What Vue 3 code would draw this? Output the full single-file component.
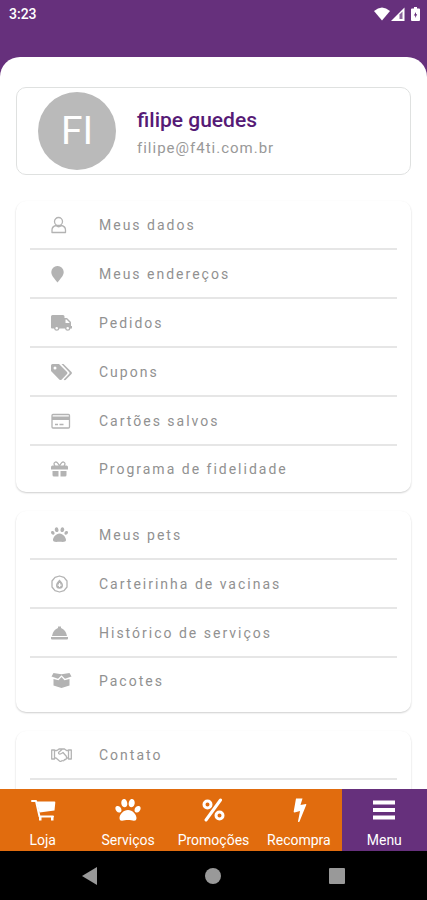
<template>
  <div class="app">
    <!-- barra de status -->
    <header class="status-bar">
      <span class="clock">3:23</span>
      <div class="status-icons">
        <svg width="16" height="14" viewBox="0 0 16 14"><path d="M0 4Q8-3 16 4L8 13.500Z" fill="#fff" /></svg>
        <svg width="14" height="14" viewBox="0 0 14 14">
          <path d="M0 14L13.500 .5V14Z" fill="#fff" />
          <path d="M8.500 7.500L11.500 4.500V12H8.500Z" fill="#66307c" opacity=".75" />
        </svg>
        <svg class="battery" width="9" height="14" viewBox="0 0 9 14">
          <path d="M3 0H6V1.500H8Q9 1.500 9 2.500V13Q9 14 8 14H1Q0 14 0 13V2.500Q0 1.500 1 1.500H3Z" fill="#fff" />
          <path d="M5 5L2.800 8.500H4.200V11L6.200 7.300H5Z" fill="#66307c" />
        </svg>
      </div>
    </header>

    <main class="sheet">
      <!-- perfil -->
      <section class="profile">
        <div class="avatar">FI</div>
        <div class="profile-info">
          <h1>filipe guedes</h1>
          <p>filipe@f4ti.com.br</p>
        </div>
      </section>

      <!-- grupos do menu -->
      <nav
        v-for="(group, index) in groups"
        :key="index"
        :class="['card', group.size]"
      >
        <a v-for="item in group.items" :key="item.label" href="#" class="row">
          <span class="row-icon">
            <svg :width="item.w" height="18" :viewBox="`0 0 ${item.w} 18`">
              <path v-if="item.fill" :d="item.fill" fill="currentColor" fill-rule="evenodd" />
              <path v-if="item.line" :d="item.line" fill="none" stroke="currentColor" stroke-width="1.300" stroke-linejoin="round" />
            </svg>
          </span>
          <span>{{ item.label }}</span>
        </a>
      </nav>
    </main>

    <!-- abas -->
    <nav class="tabs">
      <button
        v-for="tab in tabs"
        :key="tab.label"
        type="button"
        :class="['tab', { active: tab.label === current }]"
        @click="current = tab.label"
      >
        <svg width="26" height="24" viewBox="0 0 26 24">
          <path v-if="tab.fill" :d="tab.fill" fill="currentColor" />
          <path v-if="tab.line" :d="tab.line" fill="none" stroke="currentColor" :stroke-width="tab.stroke" stroke-linecap="round" stroke-linejoin="round" />
        </svg>
        <span>{{ tab.label }}</span>
      </button>
    </nav>

    <!-- navegação do sistema -->
    <footer class="system-nav">
      <button type="button" aria-label="Voltar">
        <svg width="18" height="18" viewBox="0 0 18 18"><path d="M16 0V18L1 9Z" fill="#999" /></svg>
      </button>
      <button type="button" aria-label="Início">
        <svg width="18" height="18" viewBox="0 0 18 18"><circle cx="9" cy="9" r="8" fill="#999" /></svg>
      </button>
      <button type="button" aria-label="Recentes">
        <svg width="18" height="18" viewBox="0 0 18 18"><rect x="1" y="1" width="16" height="16" rx="1" fill="#999" /></svg>
      </button>
    </footer>
  </div>
</template>

<script setup>
import { ref } from 'vue'

const current = ref('Menu')

const groups = [
  {
    items: [
      {
        label: 'Meus dados',
        w: 16,
        line: 'M7.500 1.500a4 4 0 1 1 0 8a4 4 0 1 1 0-8ZM5 9.500Q1 10.500 1 14V16.500H14.500V14Q14.500 10.500 10.500 9.500Q7.500 12 5 9.500Z'
      },
      {
        label: 'Meus endereços',
        w: 14,
        fill: 'M6.500 1A6 6 0 0 1 12.700 7C12.700 10.500 10 13 6.500 17.500C3 13 .3 10.500 .3 7A6 6 0 0 1 6.500 1Z'
      },
      {
        label: 'Pedidos',
        w: 22,
        fill: 'M1.500 1H12Q13.500 1 13.500 2.500V4H16L20 8V12H21V14.500H19.500A2.800 2.800 0 0 1 14 14.500H8.500A2.800 2.800 0 0 1 3 14.500H1Q0 14.500 0 13.500V2.500Q0 1 1.500 1ZM14.500 5.500V9H18.500V8.500L15.500 5.500ZM5.700 13A1.300 1.300 0 1 0 5.700 15.600A1.300 1.300 0 1 0 5.700 13ZM16.700 13A1.300 1.300 0 1 0 16.700 15.600A1.300 1.300 0 1 0 16.700 13Z'
      },
      {
        label: 'Cupons',
        w: 22,
        fill: 'M1.500 1H8L16 9Q17 10 16 11L10.500 16.700Q9.500 17.500 8.500 16.700L0 8V2.500Q0 1 1.500 1ZM4 3.500A1.500 1.500 0 1 0 4 6.500A1.500 1.500 0 1 0 4 3.500ZM10.500 1H12.500L20.500 9Q21.500 10 20.500 11L14.500 17Q13.500 17.500 12.700 16.500L18.500 10.500V9.500Z'
      },
      {
        label: 'Cartões salvos',
        w: 20,
        fill: 'M1 4.500H18.500V8H1Z',
        line: 'M2 2.500H17.500Q18.500 2.500 18.500 3.500V15Q18.500 16 17.500 16H2Q1 16 1 15V3.500Q1 2.500 2 2.500ZM4 12.500H7M8.500 12.500H12.500'
      },
      {
        label: 'Programa de fidelidade',
        w: 18,
        fill: 'M0 7Q0 5.500 1.500 5.500H15.500Q17 5.500 17 7V9.500H0ZM1.500 11H7.500V16.500H3Q1.500 16.500 1.500 15ZM9.500 11H15.500V15Q15.500 16.500 14 16.500H9.500Z',
        line: 'M8.500 6Q6 1 4 2.300Q2 3.500 4 6M8.500 6Q11 1 13 2.300Q15 3.500 13 6'
      }
    ]
  },
  {
    size: 'roomy',
    items: [
      {
        label: 'Meus pets',
        w: 18,
        fill: 'M8.500 7.500C12 7.500 15 11.500 15 14C15 16.500 11.500 15.800 8.500 15.800S2 16.500 2 14C2 11.500 5 7.500 8.500 7.500ZM5.500 1.200C7 1.200 7.700 3.500 7.500 4.700S5.500 6.700 4.300 5.200S4 1.200 5.500 1.200ZM11.500 1.200C13 1.200 13.900 3.700 12.700 5.200S9.700 5.900 9.500 4.700S10 1.200 11.500 1.200ZM1.200 5C3 4.700 3.800 6.500 3.500 7.800S1.500 9 .7 8S-.5 5.300 1.200 5ZM15.800 5C17.500 5.300 17.200 7 16.300 8S13.800 9.100 13.500 7.800S14 4.700 15.800 5Z'
      },
      {
        label: 'Carteirinha de vacinas',
        w: 18,
        fill: 'M8.500 4.500Q12 8 12 10.200A3.500 3.500 0 0 1 5 10.200Q5 8 8.500 4.500ZM8 8V9.500H6.700V10.700H8V12H9.200V10.700H10.500V9.500H9.200V8Z',
        line: 'M8.500 1L13 2.300L16 6V12L13 15.700L8.500 17L4 15.700L1 12V6L4 2.300Z'
      },
      {
        label: 'Histórico de serviços',
        w: 18,
        fill: 'M7 2.500H10V4Q15 6 16 12H1Q2 6 7 4ZM0 13H17V14.500Q17 15.500 16 15.500H1Q0 15.500 0 14.500Z'
      },
      {
        label: 'Pacotes',
        w: 22,
        fill: 'M2.500 1L10.500 2.200L18.500 1L20.500 4.500L14 6.700L10.500 3.200L7 6.700L.5 4.500ZM2.500 7L7.500 8.300L10.500 5L13.500 8.300L18.500 7V13.500L10.500 16L2.500 13.500Z'
      }
    ]
  },
  {
    size: 'open',
    items: [
      {
        label: 'Contato',
        w: 22,
        line: 'M.7 4V13H3.500V4ZM20.300 4V13H17.500V4ZM3.500 4.500H6L8 3H13.500L15.500 4.500H17.500M3.500 12H5L8.500 15Q10 16 11 14.500Q13 15.500 13.500 13.500Q15 14 15.500 12H17.500M11 3.500L7.500 6.500Q7.500 9 10.500 7.500L12 6.500L15.500 10.500V12'
      }
    ]
  }
]

const tabs = [
  {
    label: 'Loja',
    fill: 'M6.500 3.500H24.500Q25.500 3.500 25.300 4.500L24.500 12.500L9.500 14.500ZM9 18.500H11.500V22.500H9ZM21 18.500H23.500V22.500H21Z',
    line: 'M2 3H6L9.500 18.500H23',
    stroke: 2
  },
  {
    label: 'Serviços',
    fill: 'M13 12C17.500 12 21.500 16.500 21.500 20C21.500 24.500 17 22 13 22S4.500 24.500 4.500 20C4.500 16.500 8.500 12 13 12ZM8.700 1C11.200 .6 12.500 4 12.300 6.500S9.500 10.300 7.500 8.200S6 1.500 8.700 1ZM17.300 1C20 1.500 20.500 6 18.500 8.200S13.900 9 13.700 6.500S14.800 .6 17.300 1ZM2.200 8C4.700 7.300 6.500 10 6.500 12.200S3.500 15.500 1.600 13.300S0 8.500 2.200 8ZM23.800 8C26 8.500 26.300 11.100 24.400 13.300S19.500 14.400 19.500 12.200S21.300 7.300 23.800 8Z'
  },
  {
    label: 'Promoções',
    line: 'M20.500 2L6 22M7.500 3a3.500 3.500 0 1 1 0 7a3.500 3.500 0 1 1 0-7ZM19.500 14a3.500 3.500 0 1 1 0 7a3.500 3.500 0 1 1 0-7Z',
    stroke: 3
  },
  {
    label: 'Recompra',
    fill: 'M10 .5H16.500L14.500 7L20 6Q20.500 6 20.200 7L13.500 23.500Q12.500 24.500 12 23.500L14 13L8.500 14.500Q7.500 14.500 7.700 13.500Z'
  },
  {
    label: 'Menu',
    fill: 'M2 2.500H24V6.500H2ZM2 10H24V14H2ZM2 17.500H24V21.500H2Z'
  }
]
</script>

<style>
body {
  margin: 0;
}
</style>

<style scoped>
.app {
  display: flex;
  flex-direction: column;
  height: 100vh;
  background: #66307c;
  font-family: Roboto, "Liberation Sans", sans-serif;
}

.status-bar {
  display: flex;
  align-items: center;
  justify-content: space-between;
  height: 27px;
  padding: 0 7px 30px 9px;
  color: #fff;
}

.clock {
  font-size: 14px;
  font-weight: 500;
}

.status-icons {
  display: flex;
  align-items: center;
  gap: 1px;
}

.battery {
  margin-left: 5px;
}

.sheet {
  flex: 1;
  min-height: 0;
  overflow: hidden;
  padding: 30px 16px 0;
  border-radius: 20px 20px 0 0;
  background: #fff;
}

.profile {
  display: flex;
  align-items: center;
  gap: 21px;
  height: 86px;
  padding-left: 21px;
  margin-bottom: 26px;
  border: 1px solid #dfe1e0;
  border-radius: 10px;
}

.avatar {
  display: flex;
  align-items: center;
  justify-content: center;
  width: 78px;
  height: 78px;
  border-radius: 50%;
  background: #bababa;
  color: #fff;
  font-size: 39px;
  line-height: 48px;
}

.profile-info h1 {
  margin: 2px 0 5px;
  color: #561a76;
  font-size: 21px;
  font-weight: 500;
  line-height: 26px;
}

.profile-info p {
  margin: 0;
  color: #999;
  font-size: 15px;
  line-height: 20px;
  letter-spacing: 1px;
}

.card {
  margin-bottom: 19px;
  padding: 0 14px;
  border-radius: 10px;
  box-shadow: 0 1px 2px rgba(0, 0, 0, 0.2);
}

.card.roomy {
  padding-bottom: 8px;
}

.card.open {
  padding-bottom: 48px;
}

.row {
  display: flex;
  align-items: center;
  height: 47px;
  padding-left: 21px;
  border-bottom: 2px solid #e6e6e6;
  color: #919191;
  font-size: 14px;
  letter-spacing: 2px;
  text-decoration: none;
}

.row:last-child {
  height: 46px;
  border-bottom: 0;
}

.card.open .row {
  height: 47px;
  border-bottom: 2px solid #e6e6e6;
}

.row-icon {
  display: flex;
  width: 48px;
  color: #b3b3b3;
}

.tabs {
  display: grid;
  grid-template-columns: repeat(5, 1fr);
  background: #e16c0e;
}

.tab {
  display: flex;
  flex-direction: column;
  align-items: center;
  gap: 9px;
  height: 62px;
  padding: 9px 0 0;
  border: 0;
  background: none;
  color: #fff;
  font-family: inherit;
  font-size: 14px;
  line-height: 18px;
  cursor: pointer;
}

.tab.active {
  background: #66307c;
}

.system-nav {
  display: flex;
  justify-content: space-around;
  align-items: center;
  height: 49px;
  padding: 0 28px;
  background: #000;
}

.system-nav button {
  display: flex;
  padding: 0;
  border: 0;
  background: none;
}
</style>
